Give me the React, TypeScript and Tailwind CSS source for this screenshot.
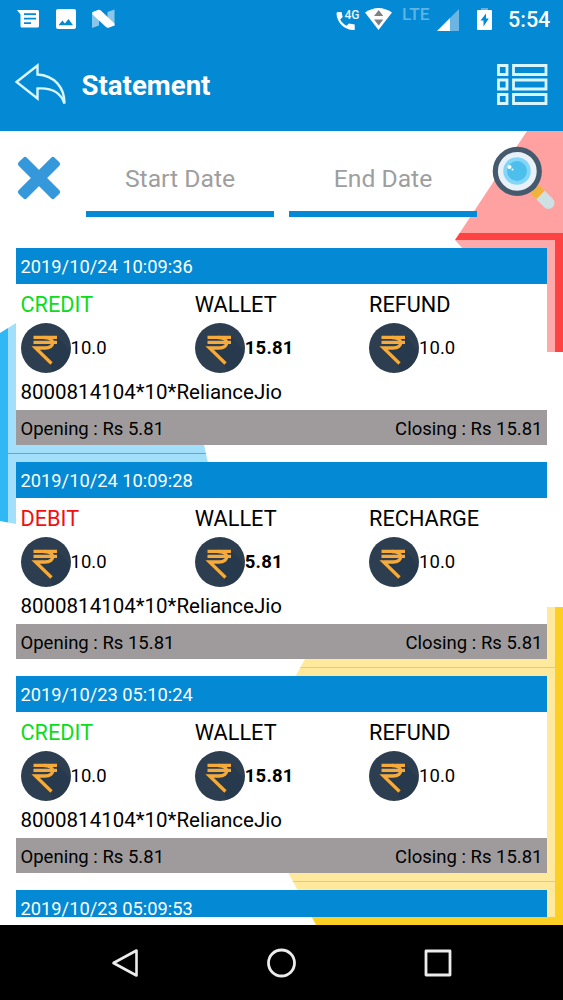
import clsx from "clsx";

interface Transaction {
	date: string;
	details?: {
		kind: "CREDIT" | "DEBIT";
		reason: string;
		amount: string;
		wallet: string;
		note: string;
		opening: string;
		closing: string;
	};
}

const transactions: Transaction[] = [
	{
		date: "2019/10/24 10:09:36",
		details: {
			kind: "CREDIT",
			reason: "REFUND",
			amount: "10.0",
			wallet: "15.81",
			note: "8000814104*10*RelianceJio",
			opening: "5.81",
			closing: "15.81",
		},
	},
	{
		date: "2019/10/24 10:09:28",
		details: {
			kind: "DEBIT",
			reason: "RECHARGE",
			amount: "10.0",
			wallet: "5.81",
			note: "8000814104*10*RelianceJio",
			opening: "15.81",
			closing: "5.81",
		},
	},
	{
		date: "2019/10/23 05:10:24",
		details: {
			kind: "CREDIT",
			reason: "REFUND",
			amount: "10.0",
			wallet: "15.81",
			note: "8000814104*10*RelianceJio",
			opening: "5.81",
			closing: "15.81",
		},
	},
	{ date: "2019/10/23 05:09:53" },
];

function StatusBar() {
	return (
		<div className="flex h-[39px] items-center justify-between pr-[12px] pl-[17px]">
			<svg width="100" height="39" viewBox="17 0 100 39">
				<path fill="#fff" fillRule="evenodd" d="M17 10H37.5a1.5 1.5 0 0 1 1.5 1.5V26a1.5 1.5 0 0 1-1.500 1.500H22a1.500 1.500 0 0 1-1.500-1.500V14.500ZM24 13.200v1.800h12v-1.800ZM24 17.700v1.800h12v-1.800ZM24 22.300v1.800h7v-1.800Z" />
				<path fill="#fff" fillRule="evenodd" d="M58 9H74a2 2 0 0 1 2 2V27a2 2 0 0 1-2 2H58a2 2 0 0 1-2-2V11a2 2 0 0 1 2-2ZM58.500 25.200H73L68.500 19l-3.600 4.600-2.500-3Z" />
				<path fill="#8ac6ea" d="M92 12 99 17V25.500L92 28ZM107.500 12 114.500 9.500V26L107.500 21Z" />
				<path fill="#fff" d="M92.500 12 98.500 9.800Q99.800 9.600 100.800 10.600L114.500 23.500V25.500L108.500 27.700Q107 28 106 27L92.500 14.500Z" />
			</svg>
			<div className="flex items-center">
				<svg width="160" height="39" viewBox="335 0 160 39" className="font-[Roboto,sans-serif]">
					<path fill="#fff" d="M337.500 12H341.500l1.200 5-2.500 2.500c1.400 2.800 3.500 4.800 6.300 6.200l2.400-2.300 5.800 1.200V30C344 30.500 336.500 22 336.500 13Z" />
					<text x="344.500" y="19" fontSize="13.500" fontWeight="500" fill="#e8f6ff" textLength="15" lengthAdjust="spacingAndGlyphs">4G</text>
					<path fill="#fff" d="M365 12.500Q378.500 3.500 392 12.500L378.500 30Z" />
					<path fill="#7e8082" d="M374 16 378.700 10 383.300 16ZM374 19.500H383.300L378.700 25.500Z" />
					<text x="402" y="19.700" fontSize="16.500" fontWeight="500" fill="#5fb4e5" textLength="27.500" lengthAdjust="spacingAndGlyphs">LTE</text>
					<path fill="#6ab5e3" d="M459 9V31H450V18Z" />
					<path fill="#fff" d="M450 18V31H437Z" />
					<path fill="#5fb4e5" d="M481 8h7v3h-7Z" />
					<path fill="#fff" fillRule="evenodd" d="M478 10H491a1 1 0 0 1 1 1V29a1 1 0 0 1-1 1H478a1 1 0 0 1-1-1V11a1 1 0 0 1 1-1ZM486 13.500 480.500 20.500H483.500V26.500L488.800 18.500H486Z" />
				</svg>
				<span className="ml-[13px] w-[43px] text-[21.500px] leading-[39px] font-medium whitespace-nowrap">5:54</span>
			</div>
		</div>
	);
}

function Header() {
	return (
		<header className="h-[131px] bg-[#0489d4] text-white">
			<StatusBar />
			<div className="flex h-[92px] items-center pr-[15px] pl-[15px]">
				<svg width="52" height="46" viewBox="15 62 52 46" fill="none" stroke="#d9f6ff" strokeWidth="2.400">
					<path d="M16.500 82 37.500 65.500V74.500C54 75.500 64.500 87 64.500 103.500C60.500 92 51 87.500 37.500 88.500V98.500Z" />
				</svg>
				<h1 className="mt-px ml-[14.500px] text-[27.600px] leading-8 font-bold">Statement</h1>
				<svg className="ml-auto" width="51" height="42" viewBox="497 64 51 42" fill="none" stroke="#d9f6ff" strokeWidth="2.800">
					<path d="M498.500 65.500h8.500v9h-8.500ZM513.500 65.500h32.500v9h-32.500ZM498.500 80h8.500v9h-8.500ZM513.500 80h32.500v9h-32.500ZM498.500 94.500h8.500v9h-8.500ZM513.500 94.500h32.500v9h-32.500Z" />
				</svg>
			</div>
		</header>
	);
}

function Backdrop() {
	return (
		<svg className="absolute inset-0" width="563" height="794" viewBox="0 131 563 794">
			<path fill="#ff4242" d="M527 131H563V352H540L463 249 455 240Z" />
			<path fill="#30b7f6" d="M0 333 16 323 150 350 203 440 208 463 100 510 16 524 0 521Z" />
			<path fill="#fdce24" d="M563 607H547L400 620 305 659 288 690 270 800 289 874 316 925H563Z" />
		</svg>
	);
}

function DateField({ label }: { label: string }) {
	return (
		<div className="h-[86px] w-[188px] border-b-[6px] border-[#0489d4] pt-[32px] text-center text-[24.700px] leading-8 text-[#9e9e9e]">
			{label}
		</div>
	);
}

function Filters() {
	return (
		<div className="flex h-[102px] items-start bg-white/50">
			<svg className="mt-[24px] ml-[16px]" width="46" height="46" viewBox="0 0 46 46">
				<g fill="#3498db">
					<rect x="-2.500" y="17.200" width="51" height="11.600" rx="2.500" transform="rotate(45 23 23)" />
					<rect x="-2.500" y="17.200" width="51" height="11.600" rx="2.500" transform="rotate(-45 23 23)" />
				</g>
			</svg>
			<div className="ml-[24px] flex gap-[15px]">
				<DateField label="Start Date" />
				<DateField label="End Date" />
			</div>
			<svg className="mt-[14px] ml-[13px]" width="68" height="68" viewBox="490 145 68 68">
				<path d="M532 186 537 191" stroke="#455a6c" strokeWidth="6" />
				<path d="M540 194.500 548.500 203" stroke="#cfe0e3" strokeWidth="12" strokeLinecap="round" />
				<path d="M534.500 189 540.500 195" stroke="#efb23f" strokeWidth="12" />
				<circle cx="517.300" cy="171.300" r="22" fill="#e9f1f8" stroke="#455a6c" strokeWidth="5.200" />
				<circle cx="517" cy="171" r="13.800" fill="#84d6f8" />
				<circle cx="517" cy="171" r="10" fill="#4cbfec" />
				<circle cx="509.500" cy="167" r="2" fill="#fff" />
				<circle cx="512.500" cy="169.500" r="1" fill="#fff" />
			</svg>
		</div>
	);
}

function RupeeCoin() {
	return (
		<svg width="50" height="50" viewBox="0 0 50 50" className="shrink-0">
			<circle cx="25" cy="25" r="25" fill="#2c3e50" />
			<path fill="#213345" d="M36 13 49.500 28A25 25 0 0 1 32 49L27 38 20 27Z" opacity=".4" />
			<g fill="none" stroke="#f6aa3a" strokeWidth="3.300">
				<path d="M12.500 14.300H36M12.500 19.400H36" />
				<path d="M23 14.500C34.500 14.500 34.500 25 24 25H14.500L30.500 40.500" />
			</g>
		</svg>
	);
}

function Amount({ value, bold }: { value: string; bold?: boolean }) {
	return (
		<div className="flex items-center">
			<RupeeCoin />
			<span className={clsx("pt-[2px] text-[18.500px]", bold && "font-bold tracking-[0.200px]")}>{value}</span>
		</div>
	);
}

function TransactionCard({ item }: { item: Transaction }) {
	const { date, details } = item;
	return (
		<li className={clsx("shrink-0 bg-white/55 p-2", details ? "h-[213px]" : "h-[35px] pb-0")}>
			<div className="bg-white text-black">
				<div
					className={clsx(
						"bg-[#0489d4] pl-[4.500px] text-[18.300px] leading-[38px] text-white",
						details ? "h-[36px]" : "h-[27px]",
					)}
				>
					{date}
				</div>
				{details && (
					<>
						<div className="h-[126px] pl-[4.500px]">
							<div className="grid h-[39px] grid-cols-[174.300px_174.300px_1fr] text-[21.700px] leading-[41px]">
								<span className={details.kind === "CREDIT" ? "text-[#0bdc1b]" : "text-[#f01010]"}>{details.kind}</span>
								<span>WALLET</span>
								<span>{details.reason}</span>
							</div>
							<div className="grid h-[50px] grid-cols-[174.300px_174.300px_1fr]">
								<Amount value={details.amount} />
								<Amount value={details.wallet} bold />
								<Amount value={details.amount} />
							</div>
							<div className="text-[20.500px] leading-[38px]">{details.note}</div>
						</div>
						<div className="flex h-[35px] justify-between bg-[#9f9b9d] px-[4.500px] text-[18.500px] leading-[38px]">
							<span>Opening : Rs {details.opening}</span>
							<span>Closing : Rs {details.closing}</span>
						</div>
					</>
				)}
			</div>
		</li>
	);
}

function NavBar() {
	return (
		<nav className="flex h-[75px] items-center justify-between bg-black px-[110px]">
			<svg width="30" height="32" viewBox="0 0 30 32" fill="none" stroke="#ececec" strokeWidth="2.600" strokeLinejoin="round">
				<path d="M3.500 16 26.500 3.500V28.500Z" />
			</svg>
			<svg width="32" height="32" viewBox="0 0 32 32" fill="none" stroke="#ececec" strokeWidth="2.800">
				<circle cx="15.500" cy="16" r="13" />
			</svg>
			<svg width="30" height="32" viewBox="0 0 30 32" fill="none" stroke="#ececec" strokeWidth="2.800" strokeLinejoin="round">
				<path d="M3 4H27V28H3Z" />
			</svg>
		</nav>
	);
}

export default function App() {
	return (
		<div className="flex h-[1000px] w-[563px] flex-col overflow-hidden bg-white font-[Roboto,sans-serif]">
			<Header />
			<main className="relative h-[794px] overflow-hidden">
				<Backdrop />
				<div className="relative flex h-full flex-col">
					<Filters />
					<ul className="mx-2 mt-[7px] mb-2 flex min-h-0 flex-1 flex-col gap-px overflow-hidden">
						{transactions.map((item) => (
							<TransactionCard key={item.date} item={item} />
						))}
					</ul>
				</div>
			</main>
			<NavBar />
		</div>
	);
}
